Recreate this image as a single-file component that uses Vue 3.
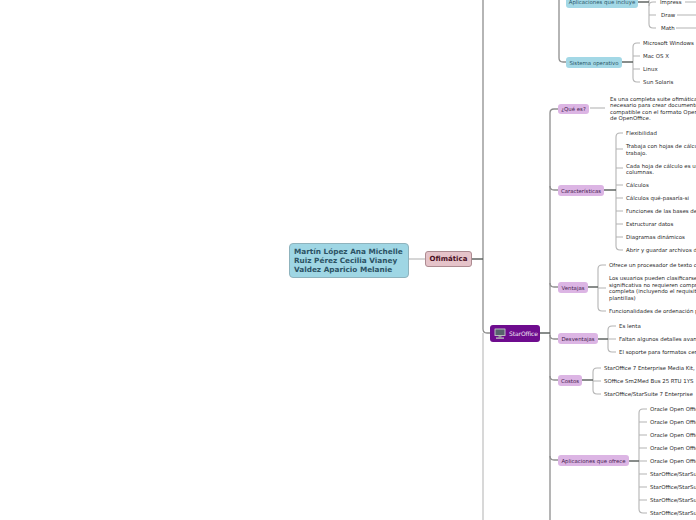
<script setup>
const branches = [
  { x: 566, y: -4, w: 72, h: 12, text: 'Aplicaciones que incluye', kind: 'blue' },
  { x: 566, y: 57, w: 56, h: 11, text: 'Sistema operativo', kind: 'blue' },
  { x: 558, y: 103.5, w: 31, h: 10, text: '¿Qué es?', kind: 'lilac' },
  { x: 558, y: 185, w: 46, h: 11, text: 'Características', kind: 'lilac' },
  { x: 558, y: 282, w: 30, h: 11, text: 'Ventajas', kind: 'lilac' },
  { x: 558, y: 333, w: 40, h: 11, text: 'Desventajas', kind: 'lilac' },
  { x: 558, y: 375, w: 24, h: 11, text: 'Costos', kind: 'lilac' },
  { x: 558, y: 455, w: 71, h: 11, text: 'Aplicaciones que ofrece', kind: 'lilac' },
]

const leaves = [
  { x: 660, y: 2, lines: ['Impress'] },
  { x: 661, y: 15, lines: ['Draw'] },
  { x: 661, y: 28, lines: ['Math'] },
  { x: 643, y: 43, lines: ['Microsoft Windows'] },
  { x: 643, y: 56, lines: ['Mac OS X'] },
  { x: 643, y: 69, lines: ['Linux'] },
  { x: 643, y: 82, lines: ['Sun Solaris'] },
  { x: 610, y: 108.5, lines: ['Es una completa suite ofimática', 'necesario para crear documentos', 'compatible con el formato OpenDocument', 'de OpenOffice.'] },
  { x: 626, y: 133, lines: ['Flexibilidad'] },
  { x: 626, y: 149, lines: ['Trabaja con hojas de cálculo en libros de', 'trabajo.'] },
  { x: 626, y: 168.5, lines: ['Cada hoja de cálculo es una tabla de filas y', 'columnas.'] },
  { x: 626, y: 185, lines: ['Cálculos'] },
  { x: 626, y: 198, lines: ['Cálculos qué-pasaría-si'] },
  { x: 626, y: 211, lines: ['Funciones de las bases de datos'] },
  { x: 626, y: 224, lines: ['Estructurar datos'] },
  { x: 626, y: 237, lines: ['Diagramas dinámicos'] },
  { x: 626, y: 250, lines: ['Abrir y guardar archivos de Microsoft'] },
  { x: 609, y: 265, lines: ['Ofrece un procesador de texto completo'] },
  { x: 609, y: 288, lines: ['Los usuarios pueden clasificarse como', 'significativa no requieren comprar una versión', 'completa (incluyendo el requisito de las', 'plantillas)'] },
  { x: 609, y: 311, lines: ['Funcionalidades de ordenación por columnas'] },
  { x: 619, y: 326, lines: ['Es lenta'] },
  { x: 619, y: 339, lines: ['Faltan algunos detalles avanzados'] },
  { x: 619, y: 352, lines: ['El soporte para formatos cerrados'] },
  { x: 604, y: 368, lines: ['StarOffice 7 Enterprise Media Kit, 25 USD'] },
  { x: 604, y: 381, lines: ['SOffice Sm2Med Bus 25 RTU 1YS'] },
  { x: 604, y: 394, lines: ['StarOffice/StarSuite 7 Enterprise'] },
  ...[409, 422, 435, 448, 461].map((y) => ({ x: 650, y, lines: ['Oracle Open Office'] })),
  ...[474, 487, 500, 513].map((y) => ({ x: 650, y, lines: ['StarOffice/StarSuite'] })),
]

function bracket(x, top, bottom, ends) {
  const r = 4
  const parts = [`M${x} ${top + r}V${bottom - r}`]
  ends.forEach((e) => {
    if (e.y === top) parts.push(`M${e.x} ${e.y}H${x + r}Q${x} ${e.y} ${x} ${e.y + r}`)
    else if (e.y === bottom) parts.push(`M${e.x} ${e.y}H${x + r}Q${x} ${e.y} ${x} ${e.y - r}`)
    else parts.push(`M${x} ${e.y}H${e.x}`)
  })
  return parts.join('')
}

const ends = (ys, x) => ys.map((y) => ({ x, y }))

const light = [
  'M409 259H425',
  bracket(649, 2, 28, ends([2, 15, 28], 656)),
  'M649 0V6',
  bracket(633, 43, 82, ends([43, 56, 69, 82], 640)),
  bracket(616, 133, 250, ends([133, 149, 168, 185, 198, 211, 224, 237, 250], 623)),
  bracket(598, 265, 311, ends([265, 288, 311], 606)),
  bracket(608, 326, 352, ends([326, 339, 352], 616)),
  bracket(593, 368, 394, ends([368, 381, 394], 601)),
  bracket(639, 409, 513, ends([409, 422, 435, 448, 461, 474, 487, 500, 513], 647)),
  'M590 108H605',
  'M685 2H696M677 15H696M676 28H696',
]

const faded = 'M483 333V520'

const trunk = [
  'M483 0V329Q483 333 487 333H490',
  'M559 0V58Q559 62 563 62H566',
  'M550 113Q550 109 554 109H558M550 113V520',
  'M550 186Q550 190 554 190H558',
  'M550 283Q550 287 554 287H558M550 335Q550 339 554 339H558',
  'M550 376Q550 380 554 380H558M550 456Q550 460 554 460H558',
]

const dark = [
  'M472 259H483',
  'M540 333H550',
  'M638 2H649',
  'M622 62H633',
  'M604 190H616',
  'M588 287H598',
  'M598 339H608',
  'M582 380H593',
  'M629 461H639',
]
</script>

<template>
  <div class="map">
    <svg class="links" width="696" height="520" viewBox="0 0 696 520">
      <path class="faded" :d="faded" />
      <path v-for="(d, i) in light" :key="'l' + i" class="light" :d="d" />
      <path v-for="(d, i) in trunk" :key="'t' + i" class="trunk" :d="d" />
      <path v-for="(d, i) in dark" :key="'d' + i" class="dark" :d="d" />
    </svg>

    <div class="node root">
      <div>Martín López Ana Michelle</div>
      <div>Ruiz Pérez Cecilia Vianey</div>
      <div>Valdez Aparicio Melanie</div>
    </div>
    <div class="node main">Ofimática</div>
    <div class="node star">
      <svg width="12" height="11" viewBox="0 0 12 11">
        <rect x="0.5" y="0.5" width="11" height="7.5" rx="0.5" fill="#b9bcc0" />
        <rect x="1.5" y="1.5" width="9" height="5.5" fill="#56626c" />
        <rect x="4.5" y="8" width="3" height="1.5" fill="#8e9094" />
        <rect x="2" y="9.4" width="8" height="1.4" fill="#b5b7ba" />
      </svg>
      <span>StarOffice</span>
    </div>

    <div
      v-for="b in branches"
      :key="b.text"
      class="node branch"
      :class="b.kind"
      :style="{ left: b.x + 'px', top: b.y + 'px', width: b.w + 'px', height: b.h + 'px' }"
    >{{ b.text }}</div>

    <div
      v-for="(l, i) in leaves"
      :key="i"
      class="leaf"
      :style="{ left: l.x + 'px', top: l.y + 'px' }"
    >
      <div v-for="t in l.lines" :key="t">{{ t }}</div>
    </div>
  </div>
</template>

<style scoped>
.map {
  position: relative;
  width: 696px;
  height: 520px;
  overflow: hidden;
  background: #ffffff;
  font-family: "DejaVu Sans", Verdana, sans-serif;
}
.links {
  position: absolute;
  left: 0;
  top: 0;
}
.links path {
  fill: none;
}
.faded {
  stroke: #cfcfcf;
  stroke-width: 1.6;
}
.light {
  stroke: #b4b4b4;
  stroke-width: 1.1;
}
.trunk {
  stroke: #8e8e8e;
  stroke-width: 1.3;
}
.dark {
  stroke: #555b58;
  stroke-width: 1.4;
}
.node {
  position: absolute;
  box-sizing: border-box;
  display: flex;
  align-items: center;
  white-space: nowrap;
}
.root {
  left: 289px;
  top: 243px;
  width: 120px;
  height: 35px;
  padding-left: 4px;
  flex-direction: column;
  align-items: flex-start;
  justify-content: center;
  background: #9fd6e4;
  border: 1px solid #8fb3bd;
  border-radius: 4px;
  color: #2c5364;
  font-size: 7.3px;
  font-weight: 700;
  line-height: 9px;
}
.main {
  left: 425px;
  top: 251px;
  width: 47px;
  height: 16px;
  justify-content: center;
  background: #e5c3c9;
  border: 1px solid #ad8b91;
  border-radius: 3px;
  color: #4a1024;
  font-size: 7px;
  font-weight: 700;
}
.star {
  left: 490px;
  top: 325px;
  width: 50px;
  height: 17px;
  padding-left: 4px;
  gap: 3px;
  background: #6e0c8e;
  border-radius: 3px;
  color: #f0e6f4;
  font-size: 6px;
  letter-spacing: -0.1px;
}
.branch {
  justify-content: center;
  border-radius: 3px;
  font-size: 5.4px;
}
.blue {
  background: #a3d8e6;
  color: #2a5666;
}
.lilac {
  background: #dcb5e4;
  color: #44204e;
}
.leaf {
  position: absolute;
  transform: translateY(-50%);
  color: #2a2a2a;
  font-size: 5.45px;
  line-height: 6.5px;
  white-space: nowrap;
}
</style>

<style>
html,
body {
  margin: 0;
  overflow: hidden;
}
</style>
